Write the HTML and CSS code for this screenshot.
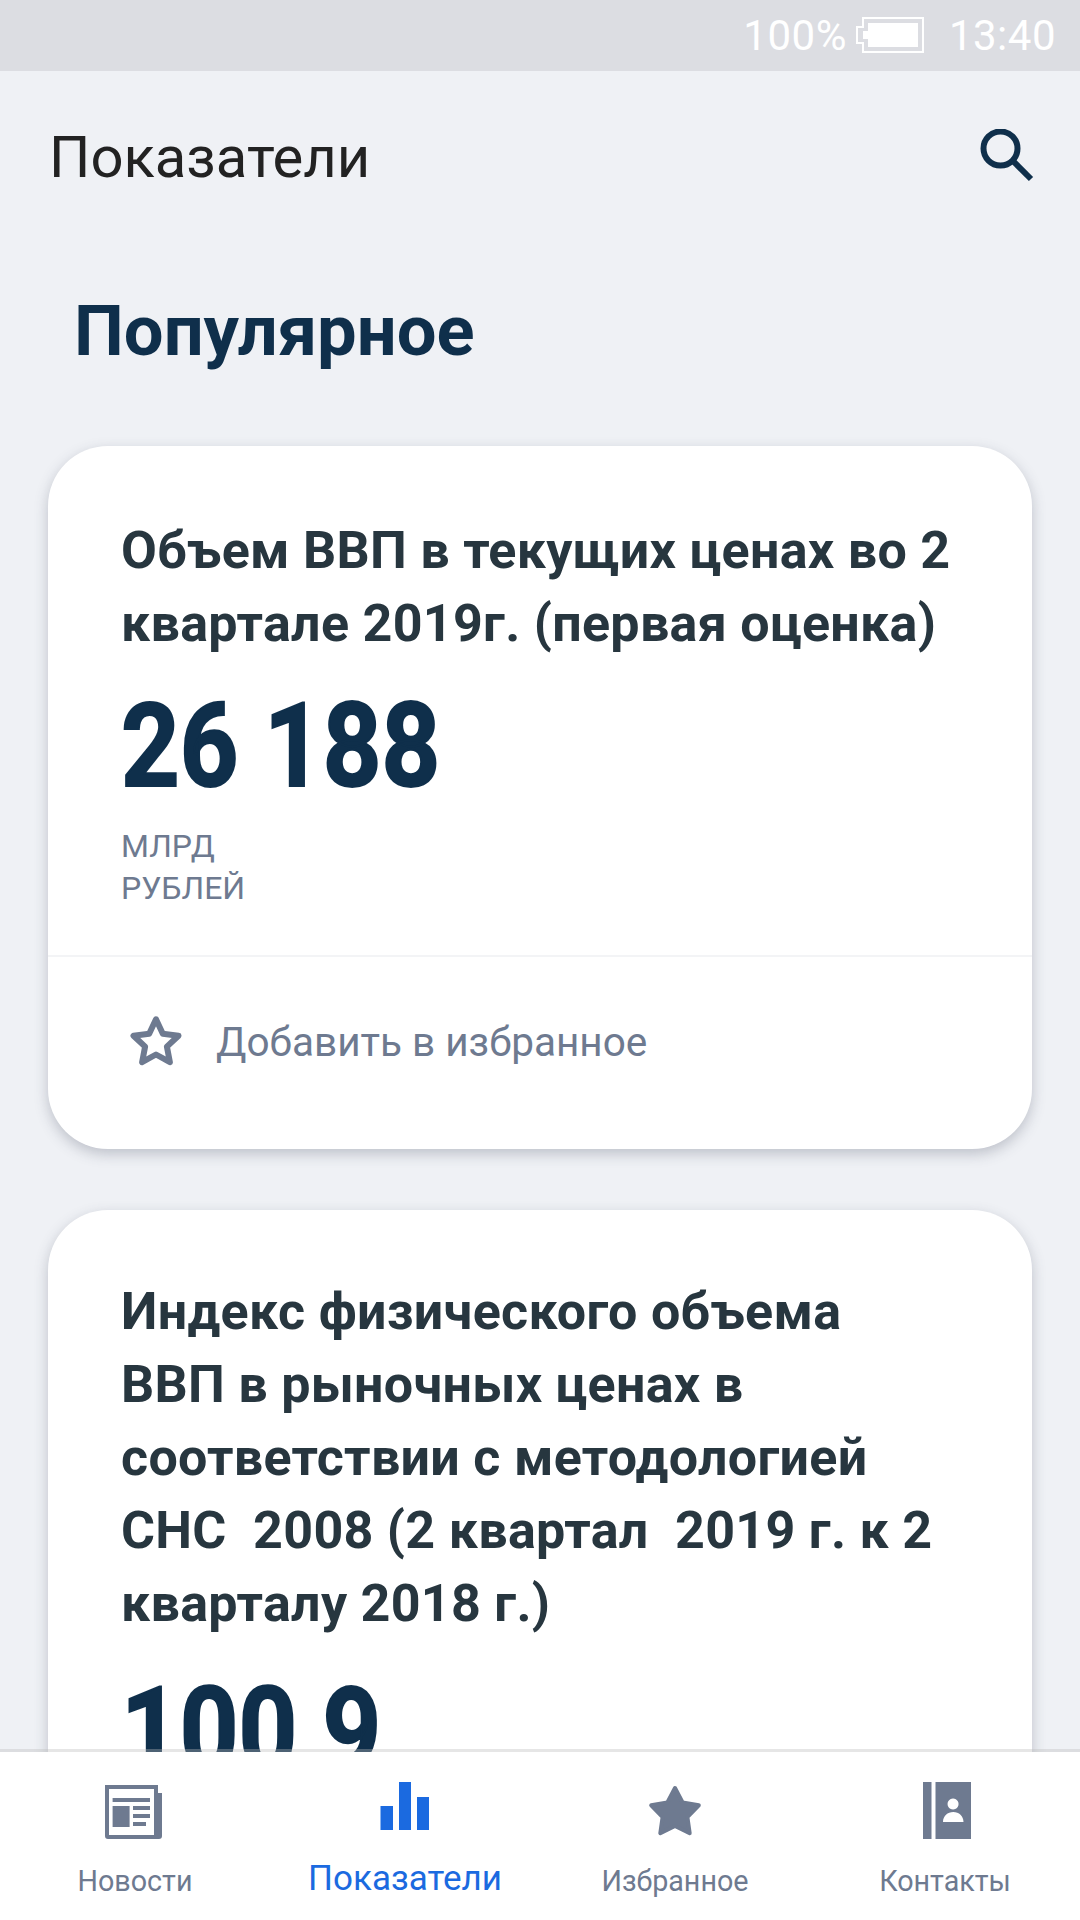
FILE: index.html
```html
<!DOCTYPE html>
<html lang="ru">
<head>
<meta charset="utf-8">
<title>Показатели</title>
<link rel="stylesheet" href="styles.css">
</head>
<body>
<div class="screen">
  <div class="status">
    <span>100%</span>
    <svg class="battery" width="68" height="37" viewBox="0 0 68 37"><path class="batt-line" d="M7 1h60v34H7v-9H1V10h6z"/><rect class="batt-fill" x="12" y="6" width="50" height="24"/><path class="batt-fill" d="M7 14h5v8H7z"/></svg>
    <span class="clock">13:40</span>
  </div>
  <header class="appbar">
    <h1>Показатели</h1>
    <svg class="search" width="56" height="56" viewBox="0 0 56 56"><circle cx="22.500" cy="19.500" r="17" class="search-line"/><path d="M33 30l20 20" class="search-line"/></svg>
  </header>
  <main>
    <h2 class="section">Популярное</h2>
    <article class="card">
      <div class="card-body">
        <h3>Объем ВВП в текущих ценах во 2 квартале 2019г. (первая оценка)</h3>
        <div class="value">26 188</div>
        <div class="unit">МЛРД<br>РУБЛЕЙ</div>
      </div>
      <div class="card-foot">
        <svg class="fav" width="54" height="52" viewBox="0 0 54 52"><path d="M27 3.300L33.800 17.700 49.500 19.700 37.900 30.600 40.900 46.200 27 38.500 13.100 46.200 16.100 30.600 4.500 19.700 20.200 17.700z"/></svg>
        <span>Добавить в избранное</span>
      </div>
    </article>
    <article class="card">
      <div class="card-body card-body-long">
        <h3>Индекс физического объема ВВП&nbsp;в рыночных ценах в соответствии с методологией СНС&nbsp; 2008 (2 квартал&nbsp; 2019 г. к 2 кварталу 2018 г.)</h3>
        <div class="value">100,9</div>
      </div>
    </article>
  </main>
  <nav class="tabs">
    <div class="tab">
      <svg width="60" height="60" viewBox="0 0 60 60"><path class="ic" fill-rule="evenodd" d="M0 5h53v8h4v43a3 3 0 0 1-3 3H3a3 3 0 0 1-3-3zM4 9v46h45V9z"/><path class="ic" d="M7.600 18H45v4H7.600zM7.600 26h17v21h-17zM28 26h17v4H28zM28 34h17v4H28zM28 42h13v4H28z"/></svg>
      <span>Новости</span>
    </div>
    <div class="tab active">
      <svg width="60" height="60" viewBox="0 0 60 60"><path class="ic" d="M5.500 26H18v24H5.500zM24 2h12v48H24zM42 17h12v33H42z"/></svg>
      <span>Показатели</span>
    </div>
    <div class="tab">
      <svg width="60" height="60" viewBox="0 0 60 60"><path class="ic ic-round" d="M30 8L37.600 22.500 53.800 25.300 42.400 37 44.700 53.200 30 46 15.300 53.200 17.600 37 6.200 25.300 22.400 22.500z"/></svg>
      <span>Избранное</span>
    </div>
    <div class="tab">
      <svg width="60" height="60" viewBox="0 0 60 60"><path class="ic" fill-rule="evenodd" d="M8 2h8.500v57H8zM20.500 2H56v57H20.500zM38 18.500a5.500 5.500 0 1 0 .1 0zM28 42h20.500c0-6-4.500-10-10.200-10S28 36 28 42z"/></svg>
      <span>Контакты</span>
    </div>
  </nav>
</div>
</body>
</html>
```
FILE: styles.css
```css
* { box-sizing: border-box; }
html, body { margin: 0; padding: 0; }
body { font-family: Roboto, "Noto Sans", sans-serif; background: #eff1f5; }
.screen { position: relative; width: 1080px; height: 1920px; overflow: hidden; background: #eff1f5; }

.status { height: 71px; background: #dcdde2; color: #fff; font-size: 42px; display: flex; align-items: center; justify-content: flex-end; padding-right: 24px; letter-spacing: .5px; }
.battery { margin-left: 9px; }
.batt-line { fill: none; stroke: #fff; stroke-width: 2; }
.batt-fill { fill: #fff; }
.clock { margin-left: 25px; }

.appbar { height: 172px; display: flex; align-items: center; justify-content: space-between; padding: 0 46px 0 49px; }
.appbar h1 { margin: 0; font-size: 58px; font-weight: 400; color: #222; }
.search-line { fill: none; stroke: #0f2f4b; stroke-width: 6; }

main { padding: 0 48px; }
.section { margin: 53px 0 80px 26px; font-size: 70.500px; line-height: 70px; font-weight: 700; color: #0f2f4b; }

.card { background: #fff; border-radius: 60px; box-shadow: 0 5px 14px rgba(60, 70, 90, .28); margin-bottom: 61px; }
.card-body { padding: 68px 70px 46px 73px; }
.card-body-long { padding-top: 65px; }
.card-body-long .value { margin-top: 29px; }
.card h3 { margin: 0; font-size: 52px; line-height: 73px; font-weight: 700; color: #27363f; letter-spacing: .3px; }
.value { margin-top: 25px; font-size: 117px; line-height: 122px; font-weight: 700; color: #0f2f4b; transform: scaleX(.875); transform-origin: left center; -webkit-text-stroke: 2px #0f2f4b; }
.unit { margin-top: 18px; font-size: 32px; line-height: 42px; color: #6e7a90; }
.card-foot { height: 194px; border-top: 2px solid #f3f4f6; display: flex; align-items: center; padding: 0 0 22px 81px; font-size: 40.500px; color: #6e7a90; }
.card-foot span { margin-left: 33px; }
.fav { fill: none; stroke: #6e7a90; stroke-width: 6; stroke-linejoin: round; }

.tabs { position: absolute; left: 0; right: 0; bottom: 0; height: 171px; background: #fff; background-clip: padding-box; border-top: 3px solid rgba(187, 187, 187, .37); display: grid; grid-template-columns: repeat(4, 1fr); padding-top: 28px; }
.tab { display: flex; flex-direction: column; align-items: center; font-size: 28.700px; color: #6e7a90; }
.tab span { margin-top: 23px; line-height: 36px; }
.ic { fill: #6e7a90; }
.ic-round { stroke: #6e7a90; stroke-width: 4; stroke-linejoin: round; }
.tab.active { color: #1b6ae0; font-size: 35px; }
.tab.active span { margin-top: 21px; }
.tab.active .ic { fill: #1b6ae0; }
```
